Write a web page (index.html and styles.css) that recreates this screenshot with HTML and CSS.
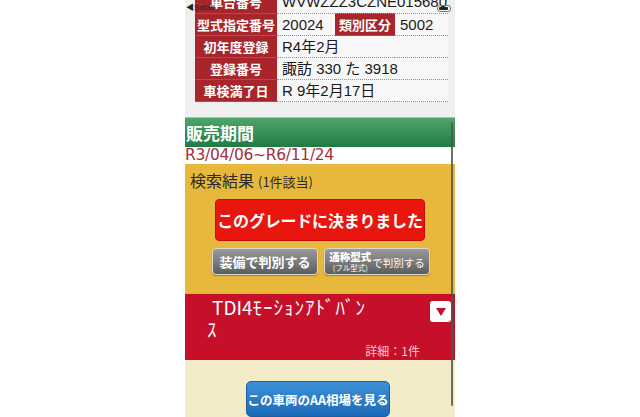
FILE: index.html
```html
<!DOCTYPE html>
<html lang="ja">
  <head>
    <meta charset="UTF-8" />
    <meta name="viewport" content="width=device-width, initial-scale=1.0" />
    <title>グレード判別</title>
    <link rel="stylesheet" href="styles.css">
  </head>
  <body>
    <div class="phone">
      <div class="status">
        <span class="back">&#9664;Safari</span>
        <span class="battery"><i></i></span>
      </div>

      <div class="top">
        <table class="spec">
          <colgroup>
            <col class="c-label" />
            <col class="c-short" />
            <col class="c-sub" />
            <col />
          </colgroup>
          <tr>
            <th>車台番号</th>
            <td colspan="3">WVWZZZ3CZNE015680</td>
          </tr>
          <tr>
            <th>型式指定番号</th>
            <td>20024</td>
            <th>類別区分</th>
            <td>5002</td>
          </tr>
          <tr>
            <th>初年度登録</th>
            <td colspan="3">R4年2月</td>
          </tr>
          <tr>
            <th>登録番号</th>
            <td colspan="3">諏訪 330 た 3918</td>
          </tr>
          <tr>
            <th>車検満了日</th>
            <td colspan="3">R 9年2月17日</td>
          </tr>
        </table>
      </div>

      <div class="period-head">販売期間</div>
      <div class="period">R3/04/06~R6/11/24</div>

      <div class="result">
        <div class="result-title">検索結果<small>(1件該当)</small></div>
        <div class="decide-wrap">
          <button class="decide">このグレードに決まりました</button>
        </div>
        <div class="judge">
          <button class="gray">装備で判別する</button>
          <button class="gray">
            <span class="stack"><b>通称型式</b><em>(フル型式)</em></span><span class="small">で判別する</span>
          </button>
        </div>
      </div>

      <div class="grade">
        <div class="grade-row">
          <p class="grade-name"><span class="latin">TDI4</span>ﾓｰｼｮﾝｱﾄﾞﾊﾞﾝｽ</p>
          <span class="toggle"><i></i></span>
        </div>
        <div class="detail">詳細：1件</div>
      </div>

      <div class="more">
        <button class="blue">この車両のAA相場を見る</button>
      </div>

      <div class="scroll"></div>
    </div>
  </body>
</html>
```

FILE: styles.css
```css
* {
  padding: 0;
  margin: 0;
  box-sizing: border-box;
}
body {
  background: #fff;
  font-family: "Liberation Sans", "Noto Sans CJK JP", sans-serif;
  height: 417px;
  overflow: hidden;
}
button {
  padding: 0;
}
.phone {
  position: relative;
  margin-left: 185px;
  width: 270px;
}

/* status bar overlay */
.status {
  position: absolute;
  top: 1px;
  left: 1px;
  right: 4px;
  display: flex;
  justify-content: space-between;
  align-items: center;
  font-size: 8px;
  color: #222;
  z-index: 2;
}
.battery {
  display: block;
  width: 14px;
  height: 7px;
  border: 1px solid #777;
  border-radius: 3px;
  padding: 1px;
  margin-top: 3px;
}
.battery i {
  display: block;
  width: 9px;
  height: 3px;
  background: #222;
  border-radius: 1px;
}

/* spec table */
.top {
  background: #efefef;
  height: 118px;
  padding-left: 10px;
  overflow: hidden;
  border-bottom: 1px solid #b9b9b9;
}
.spec {
  margin-top: -10px;
  width: 253px;
  table-layout: fixed;
  border-collapse: collapse;
  font-size: 15px;
}
.c-label {
  width: 82px;
}
.c-short {
  width: 58px;
}
.c-sub {
  width: 60px;
}
.spec th {
  height: 22px;
  background: #a8262b;
  color: #fff;
  font-family: "Noto Sans CJK JP", sans-serif;
  font-weight: bold;
  font-size: 13px;
  text-align: center;
  white-space: nowrap;
  border-bottom: 1px solid #b9474b;
  line-height: 1;
}
.spec td {
  background: #f7f7f7;
  color: #1a1a1a;
  padding-left: 5px;
  border-bottom: 1px dotted #999;
  font-family: "Liberation Sans", "Noto Sans CJK JP", sans-serif;
  white-space: nowrap;
  overflow: hidden;
  line-height: 1;
}
.spec tr:first-child {
  height: 23px;
}

/* period */
.period-head {
  height: 29px;
  background: linear-gradient(#4ea56b, #1f7b45);
  color: #fff;
  font-family: "Noto Sans CJK JP", sans-serif;
  font-weight: bold;
  font-size: 17px;
  line-height: 29px;
  padding-left: 1px;
}
.period {
  height: 17px;
  background: #fff;
  color: #a2303c;
  font-family: "DejaVu Sans", sans-serif;
  font-size: 15.5px;
  line-height: 17px;
  letter-spacing: -0.3px;
}

/* result */
.result {
  height: 129px;
  background: #e8b83c;
  padding: 5px 0 0 5px;
}
.result-title {
  color: #2a2a2a;
  font-family: "Noto Sans CJK JP", sans-serif;
  font-size: 16px;
  line-height: 22px;
}
.result-title small {
  font-size: 13px;
  margin-left: 4px;
}
.decide-wrap {
  display: flex;
  padding-left: 25px;
  margin-top: 6px;
}
.decide {
  width: 210px;
  height: 42px;
  background: #e8160f;
  border: 1px solid #c40d08;
  border-radius: 4px;
  color: #fff;
  font-family: "Noto Sans CJK JP", sans-serif;
  font-weight: bold;
  font-size: 16px;
  letter-spacing: -0.2px;
}
.judge {
  display: flex;
  gap: 6px;
  padding-left: 22px;
  margin-top: 7px;
}
.gray {
  width: 106px;
  height: 27px;
  background: linear-gradient(#9a9a9a, #5d5d5d);
  border: 1px solid #d8d8d8;
  border-radius: 4px;
  color: #fff;
  font-family: "Noto Sans CJK JP", sans-serif;
  font-weight: bold;
  font-size: 13px;
  display: flex;
  align-items: center;
  justify-content: center;
  box-shadow: 0 1px 1px rgba(0, 0, 0, 0.3);
}
.gray .stack {
  display: flex;
  flex-direction: column;
  align-items: center;
  line-height: 1;
}
.gray .stack b {
  font-size: 10.5px;
}
.gray .stack em {
  font-style: normal;
  font-size: 7.5px;
  font-weight: normal;
  margin-top: 1px;
}
.gray .small {
  font-size: 10.5px;
  line-height: 1;
  font-weight: normal;
  align-self: flex-end;
  margin: 0 0 6px 1px;
}

/* grade */
.grade {
  height: 67px;
  background: #c6102a;
  border-top: 1px solid #e99a8a;
  color: #fff;
}
.grade-row {
  display: flex;
  justify-content: space-between;
  align-items: flex-start;
}
.grade-name {
  width: 164px;
  margin-left: 22px;
  text-indent: 5px;
  font-family: "Noto Sans CJK JP", sans-serif;
  font-size: 19px;
  line-height: 22px;
  letter-spacing: 1px;
  margin-top: 2px;
}
.grade-name .latin {
  letter-spacing: 0;
}
.toggle {
  display: flex;
  align-items: center;
  justify-content: center;
  width: 21px;
  height: 21px;
  background: #fff;
  border-radius: 3px;
  margin: 7px 4px 0 0;
}
.toggle i {
  width: 0;
  height: 0;
  border-left: 5px solid transparent;
  border-right: 5px solid transparent;
  border-top: 8px solid #c6102a;
}
.detail {
  text-align: right;
  padding-right: 35px;
  font-family: "Noto Sans CJK JP", sans-serif;
  font-size: 12px;
  color: #f4c9c9;
  line-height: 14px;
  margin-top: 4px;
}

/* market price */
.more {
  height: 60px;
  background: #f4ebc8;
  display: flex;
  justify-content: center;
  padding-top: 21px;
  padding-right: 4px;
}
.blue {
  width: 144px;
  height: 36px;
  background: linear-gradient(#3d90d6, #1c6bb8);
  border: 1px solid #1a5fa5;
  border-radius: 5px;
  color: #fff;
  font-family: "Noto Sans CJK JP", sans-serif;
  font-weight: bold;
  font-size: 12.5px;
}

/* scroll indicator overlay */
.scroll {
  position: absolute;
  top: 122px;
  right: 2px;
  width: 2px;
  height: 284px;
  background: #55554d;
  border-radius: 1px;
  opacity: 0.85;
}
```
